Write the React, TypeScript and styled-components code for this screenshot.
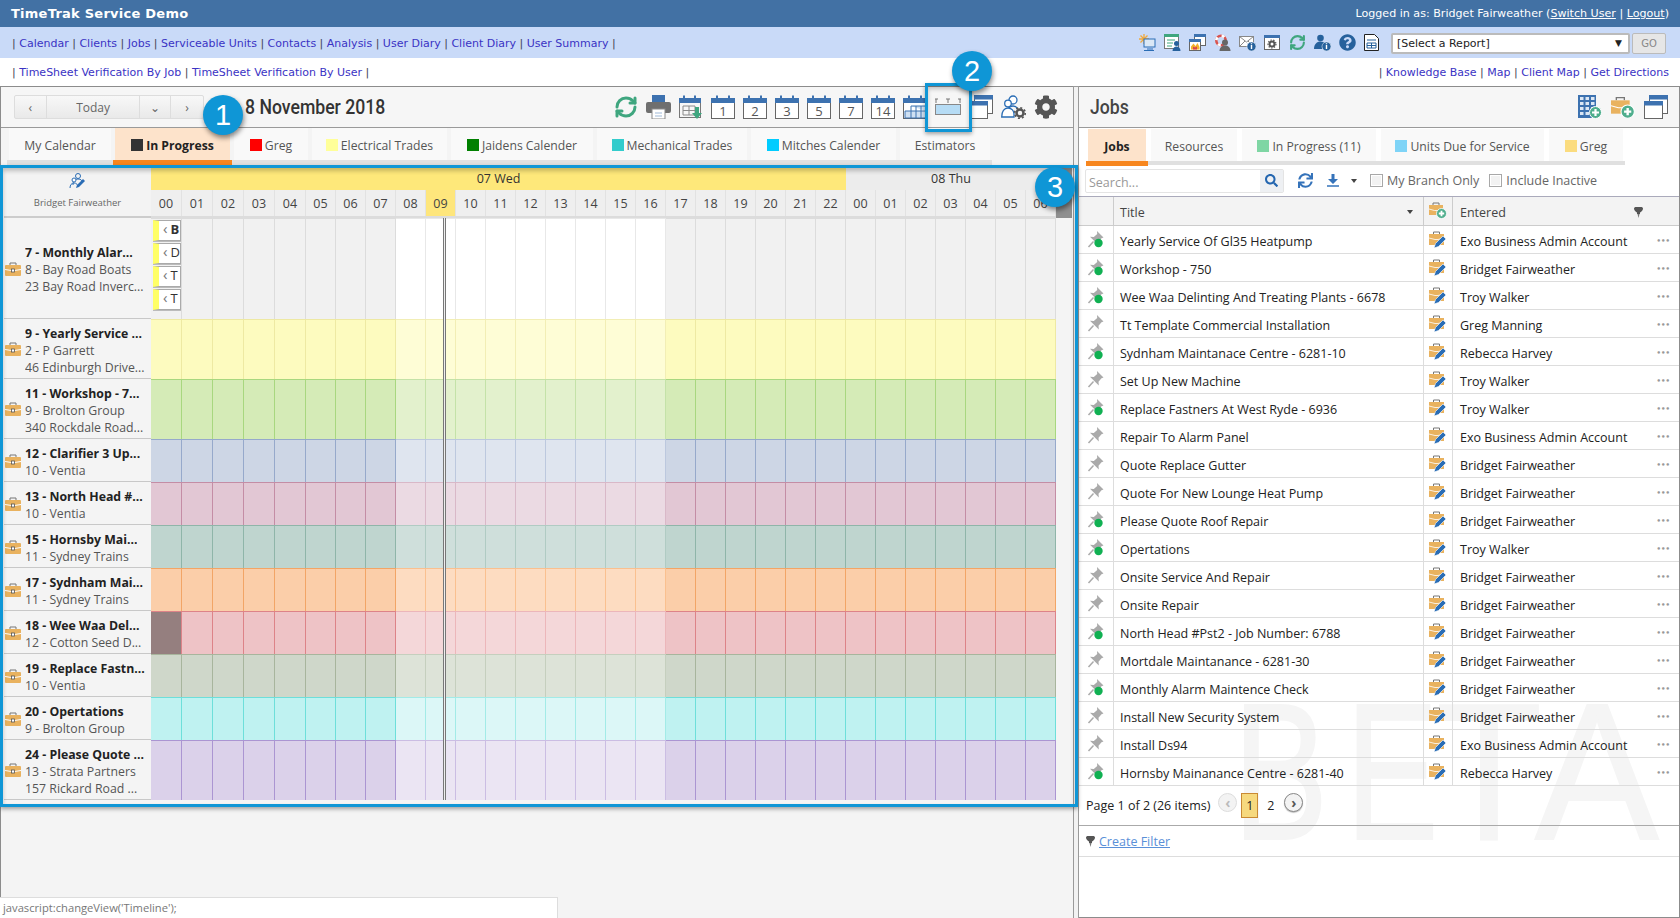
import React from 'react';
import styled, { createGlobalStyle } from 'styled-components';
import { RefreshCw } from 'lucide-react';
import { FaCog, FaQuestionCircle, FaSearch, FaSync } from 'react-icons/fa';

const BODY = `'Open Sans', 'Noto Sans', sans-serif`;
const VERDANA = `'DejaVu Sans', sans-serif`;
const CONDENSED = `'Roboto', sans-serif`;
const ACCENT = '#0f96d6';

const Global = createGlobalStyle`
  html, body { margin: 0; padding: 0; height: 100%; background: #fff; overflow: hidden; }
  body { font-family: ${BODY}; font-size: 12px; color: #333; }
  * { box-sizing: border-box; }
`;

const Page = styled.div`
  width: 1680px;
  height: 918px;
  display: flex;
  flex-direction: column;
  position: relative;
  overflow: hidden;
`;

const TitleBar = styled.header`
  height: 27px;
  background: #4271a4;
  color: #fff;
  display: flex;
  align-items: center;
  justify-content: space-between;
  padding: 0 11px;
  font: 11.1px ${VERDANA};
  a { color: #fff; text-decoration: underline; }
`;

const AppName = styled.div`
  font: bold 13px ${VERDANA};
  letter-spacing: 0.25px;
`;

const MainNav = styled.nav`
  height: 31px;
  background: #c9daf8;
  display: flex;
  align-items: center;
  padding: 0 14px 0 12px;
`;

const SubNav = styled.nav`
  height: 28px;
  background: #fff;
  display: flex;
  align-items: center;
  justify-content: space-between;
  padding: 0 11px 0 12px;
`;

const LinkLine = styled.div`
  font: 11px ${VERDANA};
  color: #445;
  white-space: nowrap;
  a { color: #3a33c4; text-decoration: none; }
`;

const MainLinks = styled(LinkLine)`
  padding-top: 2px;
`;

const NavTools = styled.div`
  margin-left: auto;
  display: flex;
  align-items: center;
  gap: 8px;
  margin-right: 12px;
  svg { display: block; }
`;

const ReportSelect = styled.div`
  width: 239px;
  height: 21px;
  margin-top: 1px;
  background: #fff;
  border: 2px solid #bbb;
  border-radius: 2px;
  display: flex;
  align-items: center;
  justify-content: space-between;
  padding: 0 6px 0 4px;
  font: 11px ${VERDANA};
  color: #222;
  span { font-size: 9px; }
`;

const GoButton = styled.div`
  width: 34px;
  height: 21px;
  margin: 1px 0 0 2px;
  background: #e6e6e6;
  border: 1px solid #bbb;
  border-radius: 2px;
  display: flex;
  align-items: center;
  justify-content: center;
  font: 10px ${VERDANA};
  color: #888;
`;

const Workspace = styled.main`
  flex: 1;
  display: flex;
  min-height: 0;
`;

const LeftPane = styled.section`
  width: 1073px;
  position: relative;
  background: #f4f4f4;
  border-top: 1px solid #8c8c8c;
  border-left: 1px solid #8c8c8c;
`;

const Divider = styled.div`
  width: 6px;
  background: #f2f2f2;
  border: 1px solid #9a9a9a;
  border-bottom: none;
`;

const RightPane = styled.section`
  flex: 1;
  position: relative;
  isolation: isolate;
  background: #fff;
  border-top: 1px solid #8c8c8c;
  border-right: 1px solid #8c8c8c;
  border-bottom: 1px solid #8c8c8c;
  display: flex;
  flex-direction: column;
`;

const Toolbar = styled.div`
  height: 41px;
  flex: none;
  background: #f6f6f6;
  border-bottom: 1px solid #9a9a9a;
  display: flex;
  align-items: center;
`;

const NavGroup = styled.div`
  margin-left: 13px;
  width: 190px;
  height: 24px;
  display: flex;
  border: 1px solid #ddd;
  border-radius: 2px;
  background: linear-gradient(#f8f8f8, #e9e9e9);
`;

const NavSeg = styled.div<{ $w: number }>`
  width: ${(p) => p.$w}px;
  display: flex;
  align-items: center;
  justify-content: center;
  color: #666;
  font-size: 12px;
  border-right: 1px solid #ddd;
  &:last-child { border-right: none; }
`;

const DateTitle = styled.h1`
  margin: 0 0 0 41px;
  font: 500 21px ${CONDENSED};
  color: #333;
  white-space: nowrap;
  transform: scaleX(0.84);
  transform-origin: left center;
`;

const ToolIcons = styled.div`
  margin-left: auto;
  margin-right: 15px;
  display: flex;
  align-items: center;
  gap: 8px;
  svg { display: block; }
`;

const ExportIcons = styled(ToolIcons)`
  margin: 0;
`;

const TabRow = styled.div<{ $pad: number }>`
  height: ${(p) => 37 - p.$pad}px;
  margin: ${(p) => p.$pad}px 0 0 ${(p) => 6 - p.$pad}px;
  padding-left: 2px;
  padding-right: 2px;
  width: fit-content;
  display: flex;
  flex: none;
  border-bottom: ${(p) => 5 - p.$pad}px solid #e0e0e0;
`;

const LeftTabs = styled(TabRow)`
  gap: 4px;
`;

const RightTabs = styled(TabRow)`
  gap: 5px;
  margin-left: 7px;
`;

const Tab = styled.div<{ $w: number; $active?: boolean }>`
  width: ${(p) => p.$w}px;
  position: relative;
  display: flex;
  align-items: center;
  justify-content: center;
  gap: 3px;
  font-size: 12.2px;
  padding-top: 3px;
  white-space: nowrap;
  color: ${(p) => (p.$active ? '#222' : '#555')};
  font-weight: ${(p) => (p.$active ? 700 : 400)};
  background: ${(p) => (p.$active ? '#fde3cb' : '#f9f9f9')};
  &::after {
    content: '';
    display: ${(p) => (p.$active ? 'block' : 'none')};
    position: absolute;
    left: -2px;
    right: -2px;
    bottom: -5px;
    height: 5px;
    background: #f7861e;
  }
`;

const Swatch = styled.span<{ $c: string }>`
  width: 12px;
  height: 12px;
  flex: none;
  margin-top: -2px;
  background: ${(p) => p.$c};
`;

const Scheduler = styled.div`
  padding: 3px 0 0 3px;
`;

const SchedHead = styled.div`
  display: flex;
  height: 50px;
`;

const CornerCell = styled.div`
  width: 147px;
  flex: none;
  background: #f3f3f3;
  border-bottom: 2px solid #ccc;
  display: flex;
  flex-direction: column;
  align-items: center;
  padding-top: 5px;
  gap: 6px;
  font-size: 9.5px;
  color: #666;
`;

const HeadTimeline = styled.div`
  width: 905px;
  display: flex;
  flex-direction: column;
`;

const DateRow = styled.div`
  height: 22px;
  display: flex;
`;

const DateCell = styled.div<{ $w: number; $today?: boolean }>`
  width: ${(p) => p.$w}px;
  display: flex;
  align-items: center;
  justify-content: center;
  padding-bottom: 1px;
  font-size: 12.5px;
  color: #333;
  background: ${(p) => (p.$today ? '#fee87a' : '#ececec')};
`;

const HourRow = styled.div`
  height: 28px;
  display: flex;
  border-bottom: 2px solid #dcdcdc;
`;

const HourCell = styled.div<{ $w: number; $now?: boolean }>`
  width: ${(p) => p.$w}px;
  display: flex;
  align-items: center;
  justify-content: center;
  padding-top: 1px;
  font-size: 12.5px;
  color: #444;
  background: ${(p) => (p.$now ? '#fee67c' : '#efefef')};
  border-right: 1px solid #e2e2e2;
`;

const ScrollStub = styled.div`
  width: 16px;
  flex: none;
  background: #8f8f8f;
`;

const Rows = styled.div`
  position: relative;
`;

const SchedRow = styled.div<{ $h: number }>`
  height: ${(p) => p.$h}px;
  display: flex;
`;

const RowLabel = styled.div`
  width: 147px;
  flex: none;
  background: #f4f4f4;
  border-bottom: 1px solid #c8c8c8;
  display: flex;
  align-items: center;
  padding-left: 1px;
  gap: 4px;
  svg { flex: none; }
`;

const RowText = styled.div`
  min-width: 0;
  padding-top: 3px;
  font-size: 12.3px;
  line-height: 17px;
  color: #555;
  white-space: nowrap;
  overflow: hidden;
  b { color: #222; }
`;

const RowCells = styled.div`
  position: relative;
  display: flex;
`;

const Slot = styled.div<{ $w: number; $bg: string; $line: string }>`
  width: ${(p) => p.$w}px;
  background: ${(p) => p.$bg};
  border-right: 1px solid ${(p) => p.$line};
  border-top: 1px solid ${(p) => p.$line};
`;

const StubStack = styled.div`
  position: absolute;
  left: 2px;
  top: 2px;
  display: flex;
  flex-direction: column;
  gap: 2px;
`;

const Stub = styled.div<{ $bold?: boolean }>`
  width: 28px;
  height: 21px;
  background: #fff;
  border: 1px solid #aaa;
  border-left: 6px solid #ffff66;
  box-shadow: 0 1px 0 #bbb;
  display: flex;
  align-items: flex-start;
  padding-left: 4px;
  gap: 3px;
  font-size: 13px;
  line-height: 17px;
  font-weight: ${(p) => (p.$bold ? 700 : 400)};
  color: #333;
  overflow: hidden;
  span { color: #777; font-weight: 400; font-size: 15px; line-height: 15px; }
`;

const NowLine = styled.div`
  position: absolute;
  top: 0;
  bottom: 0;
  left: 439px;
  width: 3px;
  border-left: 1px solid #777;
  border-right: 1px solid #777;
  background: #eee;
`;

const Badge = styled.div<{ $x: number; $y: number }>`
  position: absolute;
  left: ${(p) => p.$x}px;
  top: ${(p) => p.$y}px;
  width: 40px;
  height: 40px;
  border-radius: 50%;
  background: ${ACCENT};
  color: #fff;
  font: 29px 'Liberation Sans', sans-serif;
  display: flex;
  align-items: center;
  justify-content: center;
  box-shadow: 1px 3px 5px rgba(0, 0, 0, 0.45);
  z-index: 3;
`;

const Callout = styled.div<{ $x: number; $y: number; $w: number; $h: number }>`
  position: absolute;
  left: ${(p) => p.$x}px;
  top: ${(p) => p.$y}px;
  width: ${(p) => p.$w}px;
  height: ${(p) => p.$h}px;
  border: 3px solid ${ACCENT};
  box-shadow: 0 2px 4px rgba(0, 0, 0, 0.35), inset 0 3px 4px rgba(0, 0, 0, 0.22);
  pointer-events: none;
  z-index: 2;
`;

const StatusTip = styled.div`
  position: absolute;
  left: 0;
  bottom: 0;
  width: 558px;
  height: 21px;
  background: #fff;
  border-top: 1px solid #ddd;
  border-right: 1px solid #ddd;
  padding-left: 3px;
  font-size: 11.2px;
  line-height: 20px;
  color: #777;
`;

const PaneTitle = styled.h2`
  margin: 0 0 0 11px;
  font: 500 21px ${CONDENSED};
  color: #444;
  transform: scaleX(0.84);
  transform-origin: left center;
`;

const JobIcons = styled.div`
  margin-left: auto;
  margin-right: 11px;
  display: flex;
  gap: 9px;
  svg { display: block; }
`;

const SearchRow = styled.div`
  height: 31px;
  flex: none;
  display: flex;
  align-items: center;
  padding-left: 6px;
  font-size: 12.5px;
  color: #666;
`;

const SearchBox = styled.div`
  width: 199px;
  height: 24px;
  border: 1px solid #e4e4e4;
  border-radius: 2px;
  display: flex;
  align-items: center;
  justify-content: space-between;
  padding: 3px 0 0 3px;
  color: #999;
  background: #fff;
`;

const SearchBtn = styled.div`
  width: 23px;
  height: 22px;
  margin-top: -3px;
  background: #eef0f3;
  display: flex;
  align-items: center;
  justify-content: center;
  color: #2466b0;
`;

const RowTools = styled.div`
  display: flex;
  align-items: center;
  margin-left: 14px;
  gap: 14px;
  color: #3573ba;
  svg { display: block; }
`;

const Caret = styled.span`
  width: 0;
  height: 0;
  margin-left: -2px;
  border-left: 3.5px solid transparent;
  border-right: 3.5px solid transparent;
  border-top: 4px solid #444;
`;

const CheckLabel = styled.label<{ $ml: number }>`
  display: flex;
  align-items: center;
  gap: 4px;
  margin-left: ${(p) => p.$ml}px;
`;

const CheckBox = styled.span`
  width: 13px;
  height: 13px;
  background: #f2f2f2;
  border: 1px solid #a8a8a8;
  box-shadow: inset 0 0 0 1px #fff;
`;

const GridHead = styled.div`
  height: 30px;
  flex: none;
  display: grid;
  grid-template-columns: 35px 310px 29px 1fr;
  background: #f3f3f3;
  border-top: 1px solid #aab;
  border-bottom: 1px solid #ccc;
  font-size: 12.5px;
  color: #444;
`;

const HeadCell = styled.div`
  display: flex;
  align-items: center;
  justify-content: space-between;
  padding: 2px 10px 0 6px;
  border-right: 1px solid #ccc;
  &:last-child { border-right: none; padding: 2px 36px 0 7px; }
`;

const CenterHead = styled(HeadCell)`
  padding: 0 0 2px;
  justify-content: center;
`;

const JobRow = styled.div`
  height: 28px;
  flex: none;
  display: grid;
  grid-template-columns: 35px 310px 29px 1fr;
  border-bottom: 1px solid #ddd;
  font-size: 12.5px;
  color: #222;
`;

const JobCell = styled.div`
  display: flex;
  align-items: center;
  padding: 3px 0 0 6px;
  border-right: 1px solid #ddd;
  white-space: nowrap;
  &:last-child {
    border-right: none;
    justify-content: space-between;
    padding: 3px 9px 0 7px;
  }
`;

const IconCell = styled(JobCell)`
  padding: 0;
  justify-content: center;
`;

const Dots = styled.span`
  color: #999;
  font: bold 7px ${VERDANA};
`;

const Pager = styled.div`
  height: 40px;
  flex: none;
  display: flex;
  align-items: center;
  padding-left: 7px;
  border-bottom: 1px solid #aaa;
  font-size: 12.5px;
  color: #222;
`;

const PageArrow = styled.div<{ $off?: boolean }>`
  width: 19px;
  height: 19px;
  margin-top: -6px;
  border-radius: 50%;
  display: flex;
  align-items: center;
  justify-content: center;
  font-size: 14px;
  line-height: 14px;
  font-weight: 700;
  color: ${(p) => (p.$off ? '#bbb' : '#555')};
  background: #f3f3f3;
  border: 1px solid ${(p) => (p.$off ? '#ddd' : '#888')};
  box-shadow: ${(p) => (p.$off ? 'none' : '0 1px 1px rgba(0,0,0,.25)')};
`;

const PageNum = styled.div<{ $on?: boolean }>`
  width: 17px;
  height: 25px;
  margin-left: ${(p) => (p.$on ? 4 : 1)}px;
  margin-right: ${(p) => (p.$on ? 3 : 5)}px;
  display: flex;
  align-items: center;
  justify-content: center;
  background: ${(p) => (p.$on ? '#f6d97e' : 'transparent')};
  border: 1px solid ${(p) => (p.$on ? '#c98a33' : 'transparent')};
`;

const PageText = styled.span`
  margin-right: 8px;
`;

const FilterBar = styled.div`
  height: 31px;
  flex: none;
  display: flex;
  align-items: center;
  gap: 4px;
  padding-left: 7px;
  border-bottom: 1px solid #ddd;
  font-size: 12.5px;
  a { color: #5a90d8; text-decoration: underline; }
`;

const Watermark = styled.div`
  position: absolute;
  z-index: -1;
  inset: 587px 0 0 0;
  pointer-events: none;
`;

const WatermarkLetter = styled.span<{ $x: number; $sx: number }>`
  position: absolute;
  top: 0;
  left: ${(p) => p.$x}px;
  font: 195px/1 'Liberation Sans', sans-serif;
  color: #f5f5f5;
  -webkit-text-stroke: 2px #f5f5f5;
  transform: scaleX(${(p) => p.$sx});
  transform-origin: left top;
`;

const Briefcase = () => (
  <svg width="16" height="15" viewBox="0 0 16 15">
    <path d="M5 4V2h6v2" fill="none" stroke="#777" />
    <rect y="4" width="16" height="11" rx="1" fill="#e9b25f" />
    <path d="M0 8.5l6.5 1h3l6.5-1" fill="none" stroke="#fff" />
    <rect x="6.5" y="8" width="3" height="3" fill="#fff" stroke="#555" strokeWidth=".8" />
  </svg>
);

const Pin = ({ on }: { on?: boolean }) => (
  <svg width="20" height="20" viewBox="0 0 20 20">
    <path d="M11 1l6.5 6.5-2 .8-3 3.4.3 3.8L4 6.8l3.8.2 3.4-3z" fill="#aaa" />
    <path d="M7.5 11.5L2.500 17" stroke="#aaa" strokeWidth="1.5" />
    {on && <circle cx="12.500" cy="13" r="4.2" fill="#10b052" />}
  </svg>
);

const CaseEdit = () => (
  <svg width="18" height="19" viewBox="0 0 18 19">
    <path d="M4.5 4V2h6v2" fill="none" stroke="#777" />
    <rect y="4" width="15" height="11" fill="#e9b25f" />
    <path d="M0 8l6 1.500h3L15 8" fill="none" stroke="#fff" strokeWidth=".8" />
    <path d="M5 18l1.500-4.500L14 6l3 3-7.500 7.500z" fill="#2a6db5" stroke="#fff" strokeWidth=".6" />
  </svg>
);

const CaseAdd = ({ size = 18 }: { size?: number }) => (
  <svg width={size} height={size} viewBox="0 0 18 18">
    <path d="M4 4V2h6v2" fill="none" stroke="#777" />
    <rect y="4" width="14" height="10" fill="#e9b25f" />
    <path d="M0 8l5.5 1.500h3L14 8" fill="none" stroke="#fff" strokeWidth=".8" />
    <circle cx="12.5" cy="12.5" r="5" fill="#4fae8d" stroke="#fff" strokeWidth=".8" />
    <path d="M12.5 9.800v5.400M9.800 12.500h5.400" stroke="#fff" strokeWidth="1.800" />
  </svg>
);

const BuildingAdd = () => (
  <svg width="24" height="24" viewBox="0 0 24 24">
    <rect x="0" y="0" width="18" height="23" fill="#3d72b0" />
    {[2, 7.5, 13].map((x) =>
      [2, 7, 12, 17].map((y) => <rect key={`${x}-${y}`} x={x} y={y} width="3.500" height="3" fill="#dce7f4" />),
    )}
    <circle cx="17.5" cy="17.5" r="6" fill="#4fae8d" stroke="#fff" />
    <path d="M17.5 14v7M14 17.500h7" stroke="#fff" strokeWidth="2.200" />
  </svg>
);

const Windows = ({ size = 24 }: { size?: number }) => (
  <svg width={size} height={size} viewBox="0 0 24 24">
    <rect x="5.5" y=".5" width="18" height="18" fill="#fff" stroke="#666" />
    <rect x="5" y="0" width="19" height="4.500" fill="#3d72b0" />
    <rect x=".5" y="6.500" width="18" height="17" fill="#fff" stroke="#666" />
    <rect x="0" y="6" width="19" height="4.500" fill="#3d72b0" />
  </svg>
);

const CalNum = ({ n }: { n: number }) => (
  <svg width="24" height="24" viewBox="0 0 24 24">
    <rect x=".5" y="4.500" width="23" height="19" fill="#fff" stroke="#666" />
    <rect y="3" width="24" height="5" fill="#3d72b0" />
    <path d="M6 .5v5M18 .5v5" stroke="#3d72b0" strokeWidth="2" />
    <text x="12" y="20.500" textAnchor="middle" fontSize="13" fontFamily="Open Sans" fill="#555">{n}</text>
  </svg>
);

const CalMonth = () => (
  <svg width="24" height="24" viewBox="0 0 24 24">
    <rect x=".5" y="4.500" width="23" height="19" fill="#fff" stroke="#666" />
    <rect y="3" width="24" height="5" fill="#3d72b0" />
    <path d="M6 .5v5M18 .5v5" stroke="#3d72b0" strokeWidth="2" />
    <path d="M8 11h15v12H2v-7h21M8 11v12M13 11v12M18 11v12" fill="#cfe0f2" stroke="#3d72b0" />
  </svg>
);

const CalExport = () => (
  <svg width="24" height="24" viewBox="0 0 24 24">
    <rect x=".5" y="4.500" width="21" height="18" fill="#f7f7f7" stroke="#777" />
    <rect y="3" width="22" height="5" fill="#3d72b0" />
    <path d="M5 .5v5M16 .5v5" stroke="#3d72b0" strokeWidth="2" />
    <path d="M4 11h12v9H4zM4 15.500h12M10 11v9" fill="none" stroke="#8a8a8a" />
    <path d="M16 12h4v6h3l-5 6-5-6h3z" fill="#3fa67f" />
  </svg>
);

const Printer = () => (
  <svg width="25" height="24" viewBox="0 0 25 24">
    <rect x="6" y="0" width="13" height="8" fill="#3d72b0" />
    <rect y="7" width="25" height="11" rx="2" fill="#6f6f6f" />
    <rect x="6" y="14" width="13" height="10" fill="#fff" stroke="#8a8a8a" />
    <path d="M9 18h7M9 21h7" stroke="#9fb9d8" />
  </svg>
);

const TimelineIcon = () => (
  <svg width="26" height="18" viewBox="0 0 26 18">
    <path d="M1 5V1M13 5V1M25 5V1M0 1h3M11 1h4M23 1h3" stroke="#777" fill="none" />
    <rect x=".5" y="6.500" width="25" height="10" fill="#b6dcf5" stroke="#888" />
  </svg>
);

const UsersGear = () => (
  <svg width="25" height="24" viewBox="0 0 25 24">
    <circle cx="12" cy="5" r="4" fill="#fff" stroke="#2a6db5" strokeWidth="1.300" />
    <path d="M6 20c0-6 2-9 6-9 2 0 3.500.8 4.500 2.500" fill="none" stroke="#2a6db5" strokeWidth="1.300" />
    <circle cx="7" cy="8.500" r="3.300" fill="#fff" stroke="#2a6db5" strokeWidth="1.300" />
    <path d="M.7 22c0-5.500 2.500-9 6.300-9s6 3 6 6v3z" fill="#fff" stroke="#2a6db5" strokeWidth="1.300" />
    <circle cx="19" cy="18" r="3.500" fill="none" stroke="#555" strokeWidth="2.500" />
    <circle cx="19" cy="18" r="5.300" fill="none" stroke="#555" strokeWidth="1.600" strokeDasharray="2 2.100" />
  </svg>
);

const PeopleEdit = () => (
  <svg width="17" height="17" viewBox="0 0 17 17">
    <circle cx="9" cy="3" r="2.500" fill="none" stroke="#2a6db5" />
    <path d="M4 12c0-4 2-6 5-6s4 1.500 4.500 3" fill="none" stroke="#2a6db5" />
    <circle cx="5" cy="7" r="2" fill="#fff" stroke="#2a6db5" />
    <path d="M1 15c0-3 1.500-5 4-5s3 1 3 2" fill="none" stroke="#2a6db5" />
    <path d="M7 15l1-3 6-6 2 2-6 6z" fill="#2a6db5" />
  </svg>
);

const FunnelPin = () => (
  <svg width="9" height="11" viewBox="0 0 9 11">
    <path d="M0 1.500C0 .5 1 0 2 0h5c1 0 2 .5 2 1.500C9 3.500 7 5 6 5.500V7H3V5.500C2 5 0 3.500 0 1.500z" fill="#555" />
    <path d="M3.500 7h2L4.500 11z" fill="#777" />
  </svg>
);

const DownloadMark = () => (
  <svg width="12" height="13" viewBox="0 0 12 13">
    <path d="M4.500 0h3v5H11L6 10 1 5h3.500z" fill="currentColor" />
    <path d="M0 12h12" stroke="currentColor" strokeWidth="1.500" />
  </svg>
);

const InfoDot = () => (
  <g>
    <circle cx="12.500" cy="12.500" r="4.500" fill="#26619c" stroke="#fff" strokeWidth=".5" />
    <path d="M12.500 11v4M12.500 9.200v1" stroke="#fff" strokeWidth="1.400" />
  </g>
);

const TopIcons = () => (
  <NavTools>
    <svg width="17" height="17" viewBox="0 0 17 17">
      <path d="M5 0v10M0 5h10M1.500 1.500l7 7M8.500 1.500l-7 7" stroke="#f2a93b" strokeWidth="1.300" />
      <rect x="5" y="5" width="11" height="8" fill="#dbe8f6" stroke="#2a6db5" />
      <path d="M8 15h6M5 16.500h10" stroke="#2a6db5" strokeWidth="1.200" />
    </svg>
    <svg width="17" height="17" viewBox="0 0 17 17">
      <rect x=".5" y=".5" width="14" height="14" fill="#fff" stroke="#777" />
      <rect width="15" height="3" fill="#3fa67f" />
      <path d="M3 6h8M3 9h6M3 12h5" stroke="#3fa67f" />
      <circle cx="12.500" cy="9.500" r="2.500" fill="#26619c" />
      <path d="M8.500 17c0-3 2-4.500 4-4.500s4 1.500 4 4.500z" fill="#26619c" />
    </svg>
    <svg width="17" height="17" viewBox="0 0 17 17">
      <rect x="5.500" y=".5" width="11" height="11" fill="#fff" stroke="#666" />
      <rect x="5" width="12" height="3" fill="#3d72b0" />
      <rect x=".5" y="5.500" width="11" height="11" fill="#fff" stroke="#666" />
      <rect y="5" width="12" height="3" fill="#3d72b0" />
      <path d="M2 15.500v-3l2.500-3 2 2.500 2-3 2 4v2.500z" fill="#f2b12c" />
      <path d="M4 15.500v-3l2 1 2-1v3z" fill="#d9434e" />
    </svg>
    <svg width="17" height="17" viewBox="0 0 17 17">
      <circle cx="7" cy="6.500" r="4.700" fill="none" stroke="#d9534f" strokeWidth="2.600" />
      <circle cx="7" cy="6.500" r="4.700" fill="none" stroke="#fff" strokeWidth="2.600" strokeDasharray="3 4.400" />
      <circle cx="11" cy="8.500" r="3" fill="#666" />
      <path d="M5.500 17c0-3.500 2.500-5.500 5.500-5.500s5.500 2 5.500 5.500z" fill="#666" />
    </svg>
    <svg width="17" height="17" viewBox="0 0 17 17">
      <rect x=".5" y="2.500" width="14" height="10" fill="#fff" stroke="#888" />
      <path d="M.5 2.500l7 5.500 7-5.500M.5 12.500L6 7M14.500 12.500L9 7" fill="none" stroke="#888" />
      <InfoDot />
    </svg>
    <svg width="17" height="17" viewBox="0 0 17 17">
      <rect x=".5" y="1.500" width="15" height="14" fill="#fff" stroke="#666" />
      <rect y="1" width="16" height="3" fill="#3d72b0" />
      <circle cx="8" cy="10" r="2.500" fill="none" stroke="#555" strokeWidth="2" />
      <circle cx="8" cy="10" r="4" fill="none" stroke="#555" strokeWidth="1.200" strokeDasharray="1.400 1.400" />
    </svg>
    <RefreshCw size={17} color="#3fa67f" strokeWidth={3} />
    <svg width="17" height="17" viewBox="0 0 17 17">
      <circle cx="6.500" cy="4" r="3.300" fill="#26619c" />
      <path d="M0 15c0-5 3-7.500 6.500-7.500 2 0 3.500.8 4.500 2L8 15z" fill="#26619c" />
      <InfoDot />
    </svg>
    <FaQuestionCircle size={17} color="#26619c" />
    <svg width="15" height="17" viewBox="0 0 15 17">
      <path d="M.5.5h10l4 4v12H.5z" fill="#fff" stroke="#222" />
      <path d="M3 6h9M3 9h9v5H3zM7.500 9v5M3 11.500h9" fill="none" stroke="#26619c" />
    </svg>
  </NavTools>
);

const WED_HOURS = Array.from({ length: 23 }, (_, i) => String(i).padStart(2, '0'));
const THU_HOURS = ['00', '01', '02', '03', '04', '05', '06'];
const hourWidth = (i: number) => (i < 5 ? 31 : 30);
const isWorking = (i: number) => i >= 8 && i <= 16;

interface SchedJob {
  h: number;
  lines: string[];
  dark: string;
  light: string;
  line: string;
  soft: string;
}

const SCHED: SchedJob[] = [
  { h: 101, lines: ['7 - Monthly Alar...', '8 - Bay Road Boats', '23 Bay Road Inverc...'], dark: '#f1f1f1', light: '#ffffff', line: '#dcdcdc', soft: '#e8e8e8' },
  { h: 60, lines: ['9 - Yearly Service ...', '2 - P Garrett', '46 Edinburgh Drive...'], dark: '#fdfbbf', light: '#fefdd6', line: '#eee9a3', soft: '#f2eeb5' },
  { h: 60, lines: ['11 - Workshop - 7...', '9 - Brolton Group', '340 Rockdale Road...'], dark: '#d5ebb7', light: '#e3f1cd', line: '#a8d77f', soft: '#c4e2a8' },
  { h: 43, lines: ['12 - Clarifier 3 Up...', '10 - Ventia'], dark: '#cdd6e5', light: '#dfe5ef', line: '#96a9cb', soft: '#bcc8de' },
  { h: 43, lines: ['13 - North Head #...', '10 - Ventia'], dark: '#e2c7d4', light: '#ebdae3', line: '#c48da5', soft: '#d9b8c8' },
  { h: 43, lines: ['15 - Hornsby Mai...', '11 - Sydney Trains'], dark: '#bfd5cf', light: '#cfdfdb', line: '#8fb5a9', soft: '#b0cbc3' },
  { h: 43, lines: ['17 - Sydnham Mai...', '11 - Sydney Trains'], dark: '#fbcea9', light: '#fddcc1', line: '#f2a566', soft: '#fac08f' },
  { h: 43, lines: ['18 - Wee Waa Del...', '12 - Cotton Seed D...'], dark: '#eec3c6', light: '#f4d7d9', line: '#dd8388', soft: '#ecb6ba' },
  { h: 43, lines: ['19 - Replace Fastn...', '10 - Ventia'], dark: '#cfd7ca', light: '#dde3d8', line: '#a8b59d', soft: '#c5cfbe' },
  { h: 43, lines: ['20 - Opertations', '9 - Brolton Group'], dark: '#bff2f1', light: '#dcf7f7', line: '#6ddfda', soft: '#a2ebe7' },
  { h: 60, lines: ['24 - Please Quote ...', '13 - Strata Partners', '157 Rickard Road ...'], dark: '#dbd1ea', light: '#ebe5f3', line: '#ab95d2', soft: '#cbbde3' },
];

const JOBS: [string, string, boolean][] = [
  ['Yearly Service Of Gl35 Heatpump', 'Exo Business Admin Account', true],
  ['Workshop - 750', 'Bridget Fairweather', true],
  ['Wee Waa Delinting And Treating Plants - 6678', 'Troy Walker', true],
  ['Tt Template Commercial Installation', 'Greg Manning', false],
  ['Sydnham Maintanace Centre - 6281-10', 'Rebecca Harvey', true],
  ['Set Up New Machine', 'Troy Walker', false],
  ['Replace Fastners At West Ryde - 6936', 'Troy Walker', true],
  ['Repair To Alarm Panel', 'Exo Business Admin Account', false],
  ['Quote Replace Gutter', 'Bridget Fairweather', false],
  ['Quote For New Lounge Heat Pump', 'Bridget Fairweather', false],
  ['Please Quote Roof Repair', 'Bridget Fairweather', true],
  ['Opertations', 'Troy Walker', true],
  ['Onsite Service And Repair', 'Bridget Fairweather', false],
  ['Onsite Repair', 'Bridget Fairweather', false],
  ['North Head #Pst2 - Job Number: 6788', 'Bridget Fairweather', true],
  ['Mortdale Maintanance - 6281-30', 'Bridget Fairweather', false],
  ['Monthly Alarm Maintence Check', 'Bridget Fairweather', true],
  ['Install New Security System', 'Bridget Fairweather', false],
  ['Install Ds94', 'Exo Business Admin Account', false],
  ['Hornsby Mainanance Centre - 6281-40', 'Rebecca Harvey', true],
];

const LEFT_TABS: [string, number, string?][] = [
  ['My Calendar', 102],
  ['In Progress', 115, '#333333'],
  ['Greg', 74, '#ff0000'],
  ['Electrical Trades', 135, '#ffff99'],
  ['Jaidens Calender', 142, '#008000'],
  ['Mechanical Trades', 150, '#33cccc'],
  ['Mitches Calender', 145, '#00ccff'],
  ['Estimators', 90],
];

const RIGHT_TABS: [string, number, string?][] = [
  ['Jobs', 58],
  ['Resources', 86],
  ['In Progress (11)', 134, '#7fd6a4'],
  ['Units Due for Service', 163, '#7fd4f7'],
  ['Greg', 74, '#fbdc7f'],
];

const linkItems = (items: string[]) =>
  items.map((t) => (
    <React.Fragment key={t}> <a href="#">{t}</a> |</React.Fragment>
  ));

const App: React.FC = () => (
  <Page>
    <Global />
    <TitleBar>
      <AppName>TimeTrak Service Demo</AppName>
      <div>
        Logged in as: Bridget Fairweather (<a href="#">Switch User</a> | <a href="#">Logout</a>)
      </div>
    </TitleBar>
    <MainNav>
      <MainLinks>|{linkItems(['Calendar', 'Clients', 'Jobs', 'Serviceable Units', 'Contacts', 'Analysis', 'User Diary', 'Client Diary', 'User Summary'])}</MainLinks>
      <TopIcons />
      <ReportSelect>[Select a Report]<span>▼</span></ReportSelect>
      <GoButton>GO</GoButton>
    </MainNav>
    <SubNav>
      <LinkLine>|{linkItems(['TimeSheet Verification By Job', 'TimeSheet Verification By User'])}</LinkLine>
      <LinkLine>
        | <a href="#">Knowledge Base</a> | <a href="#">Map</a> | <a href="#">Client Map</a> | <a href="#">Get Directions</a>
      </LinkLine>
    </SubNav>
    <Workspace>
      <LeftPane>
        <Toolbar>
          <NavGroup>
            <NavSeg $w={32}>‹</NavSeg>
            <NavSeg $w={94}>Today</NavSeg>
            <NavSeg $w={31}>⌄</NavSeg>
            <NavSeg $w={32}>›</NavSeg>
          </NavGroup>
          <DateTitle>8 November 2018</DateTitle>
          <ToolIcons>
            <ExportIcons>
              <RefreshCw size={24} color="#3fa67f" strokeWidth={3} />
              <Printer />
              <CalExport />
            </ExportIcons>
            {[1, 2, 3, 5, 7, 14].map((n) => <CalNum key={n} n={n} />)}
            <CalMonth />
            <TimelineIcon />
            <Windows />
            <UsersGear />
            <FaCog size={24} color="#555" />
          </ToolIcons>
        </Toolbar>
        <LeftTabs $pad={0}>
          {LEFT_TABS.map(([label, w, color]) => (
            <Tab key={label} $w={w} $active={label === 'In Progress'}>
              {color && <Swatch $c={color} />}
              {label}
            </Tab>
          ))}
        </LeftTabs>
        <Scheduler>
          <SchedHead>
            <CornerCell>
              <PeopleEdit />
              Bridget Fairweather
            </CornerCell>
            <HeadTimeline>
              <DateRow>
                <DateCell $w={695} $today>07 Wed</DateCell>
                <DateCell $w={210}>08 Thu</DateCell>
              </DateRow>
              <HourRow>
                {WED_HOURS.map((h, i) => (
                  <HourCell key={`w${h}`} $w={hourWidth(i)} $now={i === 9}>{h}</HourCell>
                ))}
                {THU_HOURS.map((h) => <HourCell key={`t${h}`} $w={30}>{h}</HourCell>)}
              </HourRow>
            </HeadTimeline>
            <ScrollStub />
          </SchedHead>
          <Rows>
            {SCHED.map((job, r) => (
              <SchedRow key={job.lines[0]} $h={job.h}>
                <RowLabel>
                  <Briefcase />
                  <RowText>
                    <b>{job.lines[0]}</b>
                    {job.lines.slice(1).map((l) => <div key={l}>{l}</div>)}
                  </RowText>
                </RowLabel>
                <RowCells>
                  {WED_HOURS.map((h, i) => (
                    <Slot
                      key={`w${h}`}
                      $w={hourWidth(i)}
                      $bg={r === 7 && i === 0 ? '#957f7f' : isWorking(i) ? job.light : job.dark}
                      $line={isWorking(i) ? job.soft : job.line}
                    />
                  ))}
                  {THU_HOURS.map((h) => (
                    <Slot key={`t${h}`} $w={30} $bg={job.dark} $line={job.line} />
                  ))}
                  {r === 0 && (
                    <StubStack>
                      <Stub $bold><span>‹</span>B</Stub>
                      <Stub><span>‹</span>D</Stub>
                      <Stub><span>‹</span>T</Stub>
                      <Stub><span>‹</span>T</Stub>
                    </StubStack>
                  )}
                </RowCells>
              </SchedRow>
            ))}
            <NowLine />
          </Rows>
        </Scheduler>
        <Callout $x={-1} $y={78} $w={1078} $h={642} />
        <Callout $x={924} $y={-4} $w={47} $h={49} />
        <Badge $x={202} $y={8}>1</Badge>
        <Badge $x={951} $y={-36}>2</Badge>
        <Badge $x={1034} $y={80}>3</Badge>
      </LeftPane>
      <Divider />
      <RightPane>
        <Watermark>
          <WatermarkLetter $x={154} $sx={0.73}>B</WatermarkLetter>
          <WatermarkLetter $x={267} $sx={0.71}>E</WatermarkLetter>
          <WatermarkLetter $x={357} $sx={0.89}>T</WatermarkLetter>
          <WatermarkLetter $x={456} $sx={0.95}>A</WatermarkLetter>
        </Watermark>
        <Toolbar>
          <PaneTitle>Jobs</PaneTitle>
          <JobIcons>
            <BuildingAdd />
            <CaseAdd size={24} />
            <Windows />
          </JobIcons>
        </Toolbar>
        <RightTabs $pad={1}>
          {RIGHT_TABS.map(([label, w, color]) => (
            <Tab key={label} $w={w} $active={label === 'Jobs'}>
              {color && <Swatch $c={color} />}
              {label}
            </Tab>
          ))}
        </RightTabs>
        <SearchRow>
          <SearchBox>
            Search...
            <SearchBtn><FaSearch size={13} /></SearchBtn>
          </SearchBox>
          <RowTools>
            <FaSync size={15} />
            <DownloadMark />
            <Caret />
          </RowTools>
          <CheckLabel $ml={13}><CheckBox />My Branch Only</CheckLabel>
          <CheckLabel $ml={10}><CheckBox />Include Inactive</CheckLabel>
        </SearchRow>
        <GridHead>
          <HeadCell />
          <HeadCell>Title<Caret /></HeadCell>
          <CenterHead><CaseAdd /></CenterHead>
          <HeadCell>Entered<FunnelPin /></HeadCell>
        </GridHead>
        {JOBS.map(([title, who, live]) => (
          <JobRow key={title}>
            <IconCell><Pin on={live} /></IconCell>
            <JobCell>{title}</JobCell>
            <IconCell><CaseEdit /></IconCell>
            <JobCell>{who}<Dots>•••</Dots></JobCell>
          </JobRow>
        ))}
        <Pager>
          <PageText>Page 1 of 2 (26 items)</PageText>
          <PageArrow $off>‹</PageArrow>
          <PageNum $on>1</PageNum>
          <PageNum>2</PageNum>
          <PageArrow>›</PageArrow>
        </Pager>
        <FilterBar>
          <FunnelPin />
          <a href="#">Create Filter</a>
        </FilterBar>
      </RightPane>
    </Workspace>
    <StatusTip>javascript:changeView('Timeline');</StatusTip>
  </Page>
);

export default App;
